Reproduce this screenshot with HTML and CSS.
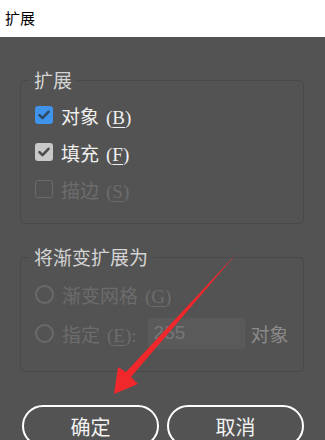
FILE: index.html
```html
<!DOCTYPE html>
<html lang="zh">
  <head>
    <meta charset="UTF-8" />
    <title>扩展</title>
    <link rel="stylesheet" href="styles.css">
  </head>
  <body>
    <div class="titlebar">扩展</div>

    <div class="dialog">
      <fieldset class="group group-expand">
        <legend>扩展</legend>
        <div class="row">
          <span class="check check-on"><svg viewBox="0 0 18 18"><path d="M4.5 9.2l3 3 6-6.4" /></svg></span>
          <span class="label">对象<span class="key">(<u>B</u>)</span></span>
        </div>
        <div class="row">
          <span class="check check-gray"><svg viewBox="0 0 18 18"><path d="M4.5 9.2l3 3 6-6.4" /></svg></span>
          <span class="label">填充<span class="key">(<u>F</u>)</span></span>
        </div>
        <div class="row disabled">
          <span class="check check-off"></span>
          <span class="label">描边<span class="key">(<u>S</u>)</span></span>
        </div>
      </fieldset>

      <fieldset class="group group-gradient">
        <legend>将渐变扩展为</legend>
        <div class="row disabled">
          <span class="radio"></span>
          <span class="label">渐变网格<span class="key">(<u>G</u>)</span></span>
        </div>
        <div class="row disabled">
          <span class="radio"></span>
          <span class="label">指定<span class="key">(<u>E</u>):</span></span>
          <span class="num-input">255</span>
          <span class="unit">对象</span>
        </div>
      </fieldset>

      <div class="buttons">
        <button class="btn">确定</button>
        <button class="btn">取消</button>
      </div>
    </div>

    <!-- annotation arrow drawn over the dialog -->
    <svg class="arrow" width="325" height="440" viewBox="0 0 325 440">
      <polygon points="237,253 131,377 138,384 114,394 118,367 126,372" fill="#f0282c" />
    </svg>
  </body>
</html>
```

FILE: styles.css
```css
* {
  box-sizing: border-box;
}
body {
  margin: 0;
  padding: 0;
  width: 325px;
  height: 440px;
  overflow: hidden;
  position: relative;
  background-color: #535353;
  font-family: "Noto Sans CJK SC", "Liberation Sans", sans-serif;
  color: #efefef;
}
.titlebar {
  height: 37px;
  line-height: 36px;
  padding-left: 5px;
  background-color: #fff;
  color: #000;
  font-size: 15px;
}
.dialog {
  padding: 0 21px 0 20px;
}
.group {
  margin: 0;
  padding: 0 0 0 14px;
  border: 1px solid #494949;
  border-radius: 4px;
  min-width: 0;
}
.group legend {
  margin-left: -6px;
  padding: 0 5px;
  font-size: 19px;
  line-height: 22px;
  color: #d4d4d4;
}
.group-expand {
  margin-top: 32px;
  padding-top: 9px;
  padding-bottom: 19px;
}
.group-gradient {
  margin-top: 22px;
  padding-top: 11px;
  padding-bottom: 22px;
}
.row {
  display: flex;
  align-items: center;
  height: 30px;
  font-size: 19px;
}
.group-expand .row + .row {
  margin-top: 7px;
}
.group-gradient .row {
  height: 31px;
}
.group-gradient .row + .row {
  margin-top: 8px;
}
.key {
  margin-left: 7px;
  font-family: "Liberation Serif", serif;
}
.key u {
  text-underline-offset: 3px;
}
.label {
  margin-left: 8px;
  white-space: nowrap;
}
.disabled {
  color: #6c6c6c;
}
.check {
  width: 18px;
  height: 18px;
  border-radius: 3px;
  flex-shrink: 0;
}
.check svg {
  display: block;
  width: 18px;
  height: 18px;
  fill: none;
  stroke-width: 2.6;
  stroke-linecap: round;
  stroke-linejoin: round;
}
.check-on {
  background-color: #3f93ea;
}
.check-on svg {
  stroke: #2f4a66;
}
.check-gray {
  background-color: #c9c9c9;
}
.check-gray svg {
  stroke: #4e4e4e;
}
.check-off {
  border: 1px solid #6a6a6a;
}
.radio {
  width: 19px;
  height: 19px;
  border: 2px solid #6a6a6a;
  border-radius: 50%;
  flex-shrink: 0;
}
.num-input {
  width: 97px;
  height: 31px;
  margin-left: 11px;
  padding: 0 6px;
  line-height: 30px;
  background-color: #5a5a5a;
  border-radius: 3px;
  font-family: "Liberation Sans", sans-serif;
  color: #777;
}
.unit {
  margin-left: 6px;
  color: #8a8a8a;
}
.buttons {
  display: flex;
  gap: 8px;
  margin-top: 33px;
  padding-left: 2px;
}
.btn {
  width: 137px;
  height: 42px;
  border: 2.5px solid #fff;
  border-radius: 21px;
  background-color: transparent;
  color: #f2f2f2;
  font-family: "Noto Sans CJK SC", sans-serif;
  font-size: 20px;
}
.arrow {
  position: absolute;
  left: 0;
  top: 0;
  pointer-events: none;
}
```
